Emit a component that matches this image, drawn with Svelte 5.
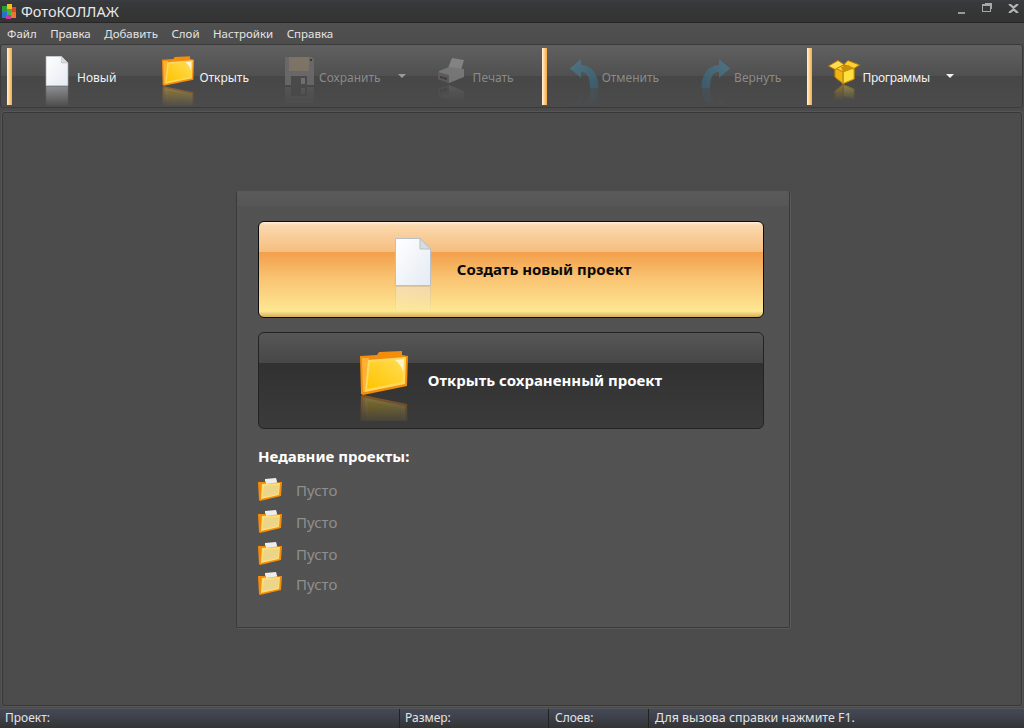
<script>
  const menu = ['Файл', 'Правка', 'Добавить', 'Слой', 'Настройки', 'Справка'];
  const recent = ['Пусто', 'Пусто', 'Пусто', 'Пусто'];
</script>

{#snippet docIcon(w, h)}
  <svg width={w} height={h} viewBox="0 0 36 48">
    <path d="M.5.5H25L35.500 11V47.500H.5Z" fill="url(#docFill)" stroke="#b9c0c8"/>
    <path d="M25 .5V11H35.500Z" fill="#d9dcdf" stroke="#b9c0c8"/>
  </svg>
{/snippet}

{#snippet folderIcon(w, h)}
  <svg width={w} height={h} viewBox="0 0 48 44">
    <path d="M0 5L17 4L19 1L42 0V4L48 5L47 35L3 44L1 43Z" fill="#f58d0c"/>
    <path d="M2 7L9 7L6 41L3 41Z" fill="#ffb135"/>
    <path d="M8 9L46 6L45 33L5 41Z" fill="#ffd95e"/>
    <path d="M10 11L44 8L43 31L7 38Z" fill="url(#folderFill)"/>
    <path d="M35 9L44 8L43.500 21C41 15 39 12 35 9Z" fill="#fff" opacity=".7"/>
  </svg>
{/snippet}

{#snippet saveIcon()}
  <svg width="30" height="30" viewBox="0 0 30 30">
    <path d="M1 1H28L30 3V29H1Z" fill="#6d6d6d"/>
    <rect x="5" y="1" width="20" height="14" fill="#84786a"/>
    <rect x="7" y="20" width="16" height="10" fill="#4c4c4c"/>
    <rect x="17" y="22" width="4" height="6" fill="#777"/>
    <rect x="26" y="3" width="2" height="2" fill="#333"/>
  </svg>
{/snippet}

{#snippet printIcon()}
  <svg width="28" height="26" viewBox="0 0 28 26">
    <path d="M15 0L27 2L24 12L11 10Z" fill="#8b8b8b"/>
    <path d="M2 13L12 9L27 11V19L12 25L1 21Z" fill="#7d7d7d"/>
    <path d="M1 14L12 17V25L1 21Z" fill="#5e5e5e"/>
    <path d="M3 18L10 20V22L3 20Z" fill="#3d3d3d"/>
    <circle cx="6" cy="21" r="1" fill="#8a4636"/>
  </svg>
{/snippet}

{#snippet arrowIcon()}
  <svg width="29" height="29" viewBox="0 0 29 29">
    <path d="M11 0L0 9.500L11 19V13C17 13 20 18 20 29H28.500C28.500 15 22 6 11 6Z" fill="url(#arrowFill)"/>
  </svg>
{/snippet}

{#snippet boxIcon()}
  <svg width="32" height="24" viewBox="0 0 32 24">
    <path d="M7 8L15 5L26 8V19L15 23.500L7 17Z" fill="#ffd21e" stroke="#b8810a"/>
    <path d="M15 12L26 8V19L15 23.500Z" fill="#ffe03f" stroke="#c9900c"/>
    <path d="M7 8L15 12V23.500L7 17Z" fill="#f0b414" stroke="#b8810a"/>
    <path d="M.5 6L10 .5L16 4.500L7 9.500Z" fill="#ffdb4d" stroke="#b8810a"/>
    <path d="M16 4.500L20 .5L31.500 5L25 9Z" fill="#ffd12e" stroke="#b8810a"/>
    <path d="M13 7L20 5L26 8L15 12Z" fill="#c98e0e"/>
  </svg>
{/snippet}

{#snippet smallFolder()}
  <svg width="24" height="23" viewBox="0 0 24 23">
    <path d="M7 1L18 0L20 7H7Z" fill="#ededed"/>
    <path d="M0 4H7L8 3V6L23 4L24 4L23 18L2 23L1 22Z" fill="#f58d0c"/>
    <path d="M4 6L22 5L21 17L3 21Z" fill="#ffdf72"/>
    <path d="M6 8L21 7L20 16L4.500 19Z" fill="#ecd58b"/>
  </svg>
{/snippet}

<svg class="defs" width="0" height="0" aria-hidden="true">
  <defs>
    <linearGradient id="docFill" x1="0" y1="0" x2="1" y2="1">
      <stop offset="0" stop-color="#ffffff"/>
      <stop offset="1" stop-color="#e4ebf3"/>
    </linearGradient>
    <linearGradient id="folderFill" x1="0" y1="1" x2="1" y2="0">
      <stop offset="0" stop-color="#ffc400"/>
      <stop offset="1" stop-color="#ffdd55"/>
    </linearGradient>
    <linearGradient id="arrowFill" x1="0" y1="0" x2="1" y2="1">
      <stop offset="0" stop-color="#4f7b8e"/>
      <stop offset="1" stop-color="#3c5e6f"/>
    </linearGradient>
  </defs>
</svg>

<div class="window">
  <header class="titlebar">
    <svg class="logo" width="14" height="15" viewBox="0 0 14 15">
      <rect x="0" y="2" width="5" height="6" fill="#2f9a3a"/>
      <rect x="5" y="0" width="5" height="5" fill="#f2c21a"/>
      <rect x="10" y="3" width="4" height="5" fill="#e0452c"/>
      <rect x="0" y="8" width="5" height="6" fill="#2a6fd6"/>
      <rect x="5" y="5" width="5" height="6" fill="#44b04a"/>
      <rect x="9" y="8" width="5" height="6" fill="#e8792a"/>
      <rect x="4" y="11" width="5" height="4" fill="#c33a9a"/>
    </svg>
    <span class="title">ФотоКОЛЛАЖ</span>
    <div class="winbtns">
      <span class="win-min"></span>
      <span class="win-max"></span>
      <svg width="11" height="9" viewBox="0 0 11 9"><path d="M1 0L5.500 3.500L10 0M1 9L5.500 5.500L10 9" fill="none" stroke="#b5b5b5" stroke-width="2.200"/></svg>
    </div>
  </header>

  <nav class="menubar">
    {#each menu as item}
      <span>{item}</span>
    {/each}
  </nav>

  <div class="toolbar">
    <div class="sep first"></div>

    <div class="tool new">
      <div class="ico">
        <div class="icon-wrap">{@render docIcon(24, 30)}</div>
        <div class="mirror">{@render docIcon(24, 30)}</div>
      </div>
      <span>Новый</span>
    </div>
    <div class="tool open">
      <div class="ico">
        <div class="icon-wrap">{@render folderIcon(32, 30)}</div>
        <div class="mirror">{@render folderIcon(32, 30)}</div>
      </div>
      <span>Открыть</span>
    </div>
    <div class="tool save off">
      <div class="ico">
        <div class="icon-wrap">{@render saveIcon()}</div>
        <div class="mirror">{@render saveIcon()}</div>
      </div>
      <span>Сохранить</span>
      <i class="caret dim"></i>
    </div>
    <div class="tool print off">
      <div class="ico">
        <div class="icon-wrap">{@render printIcon()}</div>
        <div class="mirror">{@render printIcon()}</div>
      </div>
      <span>Печать</span>
    </div>

    <div class="sep second"></div>

    <div class="tool undo off">
      <div class="ico">
        <div class="icon-wrap">{@render arrowIcon()}</div>
        <div class="mirror">{@render arrowIcon()}</div>
      </div>
      <span>Отменить</span>
    </div>
    <div class="tool redo off">
      <div class="ico flip">
        <div class="icon-wrap">{@render arrowIcon()}</div>
        <div class="mirror">{@render arrowIcon()}</div>
      </div>
      <span>Вернуть</span>
    </div>

    <div class="sep third"></div>

    <div class="tool programs">
      <div class="ico">
        <div class="icon-wrap">{@render boxIcon()}</div>
        <div class="mirror">{@render boxIcon()}</div>
      </div>
      <span>Программы</span>
      <i class="caret"></i>
    </div>
  </div>

  <main class="workspace">
    <section class="panel">
      <div class="panel-head"></div>
      <div class="panel-body">
        <button class="big primary">
          <div class="big-ico doc">
            {@render docIcon(36, 48)}
            <div class="mirror">{@render docIcon(36, 48)}</div>
          </div>
          <span>Создать новый проект</span>
        </button>
        <button class="big dark">
          <div class="big-ico folder">
            {@render folderIcon(48, 44)}
            <div class="mirror">{@render folderIcon(48, 44)}</div>
          </div>
          <span>Открыть сохраненный проект</span>
        </button>

        <h3>Недавние проекты:</h3>
        <ul>
          {#each recent as name}
            <li>{@render smallFolder()}<span>{name}</span></li>
          {/each}
        </ul>
      </div>
    </section>
  </main>

  <footer class="status">
    <div class="cell project">Проект:</div>
    <div class="cell size">Размер:</div>
    <div class="cell layers">Слоев:</div>
    <div class="cell hint">Для вызова справки нажмите F1.</div>
  </footer>
</div>

<style>
  :global(body) {
    margin: 0;
    background: #4a4a4a;
  }
  .defs {
    position: absolute;
  }
  .window {
    width: 1024px;
    height: 728px;
    display: flex;
    flex-direction: column;
    overflow: hidden;
    font-family: "Noto Sans", sans-serif;
    font-size: 12px;
    color: #e6e6e6;
  }
  .titlebar {
    height: 22px;
    flex: none;
    display: flex;
    align-items: center;
    padding: 0 5px 0 2px;
    background: linear-gradient(#3a3d44 0, #38393b 2px, #333333 100%);
    border-bottom: 1px solid #262626;
  }
  .logo {
    margin-right: 5px;
  }
  .title {
    font-size: 14.5px;
    color: #e8e8e8;
  }
  .winbtns {
    margin-left: auto;
    display: flex;
    align-items: center;
    gap: 17px;
    height: 100%;
    padding-bottom: 6px;
    box-sizing: border-box;
  }
  .win-min {
    width: 7px;
    height: 2px;
    background: #9a9a9a;
    margin-top: 10px;
  }
  .win-max {
    width: 7px;
    height: 5px;
    border: 1px solid #a8a8a8;
    border-top-width: 2px;
    box-shadow: 2px -2px 0 -1px #a8a8a8;
  }
  .menubar {
    height: 21px;
    flex: none;
    display: flex;
    align-items: center;
    gap: 13.5px;
    padding: 0 7px;
    font-size: 11.5px;
    background: linear-gradient(#505050, #4d4d4d);
    color: #e4e4e4;
  }
  .toolbar {
    height: 64px;
    flex: none;
    box-sizing: border-box;
    margin-right: 1px;
    display: flex;
    align-items: center;
    border: 1px solid #3a3a3a;
    border-radius: 3px;
    background: linear-gradient(#606060 0, #505050 50%, #474747 50%, #4b4b4b 100%);
    overflow: hidden;
  }
  .sep {
    width: 5px;
    height: 57px;
    flex: none;
    background: linear-gradient(90deg, #fff3df 0, #fcd79a 40%, #f7a843 100%);
  }
  .sep.first { margin-left: 6px; }
  .sep.second { margin-left: 28px; }
  .sep.third { margin-left: 26px; }

  .tool {
    display: flex;
    align-items: center;
    color: #f2f2f2;
    height: 100%;
  }
  .tool span {
    margin-top: 2px;
  }
  .tool.off {
    color: #8b8b8b;
  }
  .ico {
    display: flex;
    flex-direction: column;
    align-self: flex-start;
    padding-top: 11px;
    height: 50px;
    overflow: hidden;
  }
  .ico.flip {
    transform: scaleX(-1);
  }
  .off .ico {
    opacity: .85;
  }
  .icon-wrap {
    line-height: 0;
  }
  .mirror {
    line-height: 0;
    transform: scaleY(-1);
    -webkit-mask-image: linear-gradient(to top, rgba(0,0,0,.42) 0, transparent 70%);
    mask-image: linear-gradient(to top, rgba(0,0,0,.42) 0, transparent 70%);
  }
  .new { margin-left: 33px; }
  .new .ico { margin-right: 8px; }
  .open { margin-left: 46px; }
  .open .ico { margin-right: 5px; }
  .save { margin-left: 35px; }
  .save .ico { margin-right: 5px; }
  .print { margin-left: 31px; }
  .print .ico { margin-right: 8px; padding-top: 13px; }
  .undo { margin-left: 23px; }
  .undo .ico { margin-right: 3px; padding-top: 14px; }
  .redo { margin-left: 42px; }
  .redo .ico { margin-right: 4px; padding-top: 14px; }
  .programs { margin-left: 16px; }
  .programs .ico { margin-right: 2px; padding-top: 15px; }
  .programs span { letter-spacing: -.3px; }

  .caret {
    width: 0;
    height: 0;
    margin-left: 17px;
    border-left: 4px solid transparent;
    border-right: 4px solid transparent;
    border-top: 4px solid #f2f2f2;
  }
  .caret.dim {
    border-top-color: #9a9a9a;
  }
  .programs .caret {
    margin-left: 16px;
  }

  .workspace {
    flex: 1;
    margin: 4px 2px 2px 2px;
    display: flex;
    align-items: center;
    justify-content: center;
    border: 1px solid #383838;
    border-radius: 3px;
    box-shadow: 0 0 0 1px #565656;
    background: repeating-conic-gradient(#4a4a4a 0 25%, #4d4d4d 0 50%) 0 0 / 2px 2px;
  }
  .panel {
    width: 554px;
    height: 437px;
    margin-left: 2px;
    box-sizing: border-box;
    background: repeating-conic-gradient(#515151 0 25%, #545454 0 50%) 0 0 / 2px 2px;
    border: 1px solid #3a3a3a;
    border-top-color: #5a5a5a;
    border-radius: 2px;
    box-shadow: 1px 1px 0 #5a5a5a;
    display: flex;
    flex-direction: column;
  }
  .panel-head {
    height: 14px;
    flex: none;
    background: linear-gradient(#5a5a5a, #565656);
  }
  .panel-body {
    padding: 15px 25px 0 21px;
    display: flex;
    flex-direction: column;
  }
  .big {
    height: 97px;
    flex: none;
    box-sizing: border-box;
    display: flex;
    justify-content: center;
    align-items: center;
    padding: 0;
    border-radius: 6px;
    font: inherit;
    font-size: 15px;
    font-weight: 700;
  }
  .big.primary {
    gap: 26px;
    padding-left: 4px;
    margin-bottom: 14px;
    border: 1px solid #0d0d0d;
    color: #0a0a0a;
    background: linear-gradient(#fff0dc 0, #fad9ae 3px, #f6bd7e 32%, #f3a04c 32%, #f9c473 60%, #fee792 94%, #d6ad57 100%);
  }
  .big.dark {
    gap: 20px;
    border: 1px solid #232323;
    color: #fff;
    background: linear-gradient(#565656 0, #474747 32%, #303130 32%, #3b3b3b 100%);
  }
  .big-ico {
    align-self: flex-start;
    line-height: 0;
    overflow: hidden;
  }
  .big-ico.doc {
    margin-top: 16px;
    height: 72px;
  }
  .big-ico.folder {
    margin-top: 18px;
    height: 70px;
  }
  h3 {
    margin: 17px 0 8px;
    font-size: 15px;
    line-height: 20px;
    font-weight: 700;
    color: #fff;
  }
  ul {
    margin: 0;
    padding: 0;
    list-style: none;
  }
  li {
    height: 32px;
    display: flex;
    align-items: center;
    gap: 14px;
    font-size: 15px;
    color: #8f8f8f;
  }
  li:last-child {
    margin-top: -2px;
  }
  .status {
    height: 20px;
    flex: none;
    display: flex;
    box-sizing: border-box;
    border-top: 1px solid #555;
    background: linear-gradient(#454957 0, #3f424c 40%, #333333 100%);
    color: #e4e4e4;
    line-height: 18px;
  }
  .cell {
    box-sizing: border-box;
    padding-left: 5px;
    border-right: 1px solid #222;
  }
  .project { width: 400px; }
  .size { width: 149px; }
  .layers { width: 100px; padding-left: 6px; }
  .hint { flex: 1; border-right: 0; padding-left: 6px; font-size: 12.4px; }
</style>
